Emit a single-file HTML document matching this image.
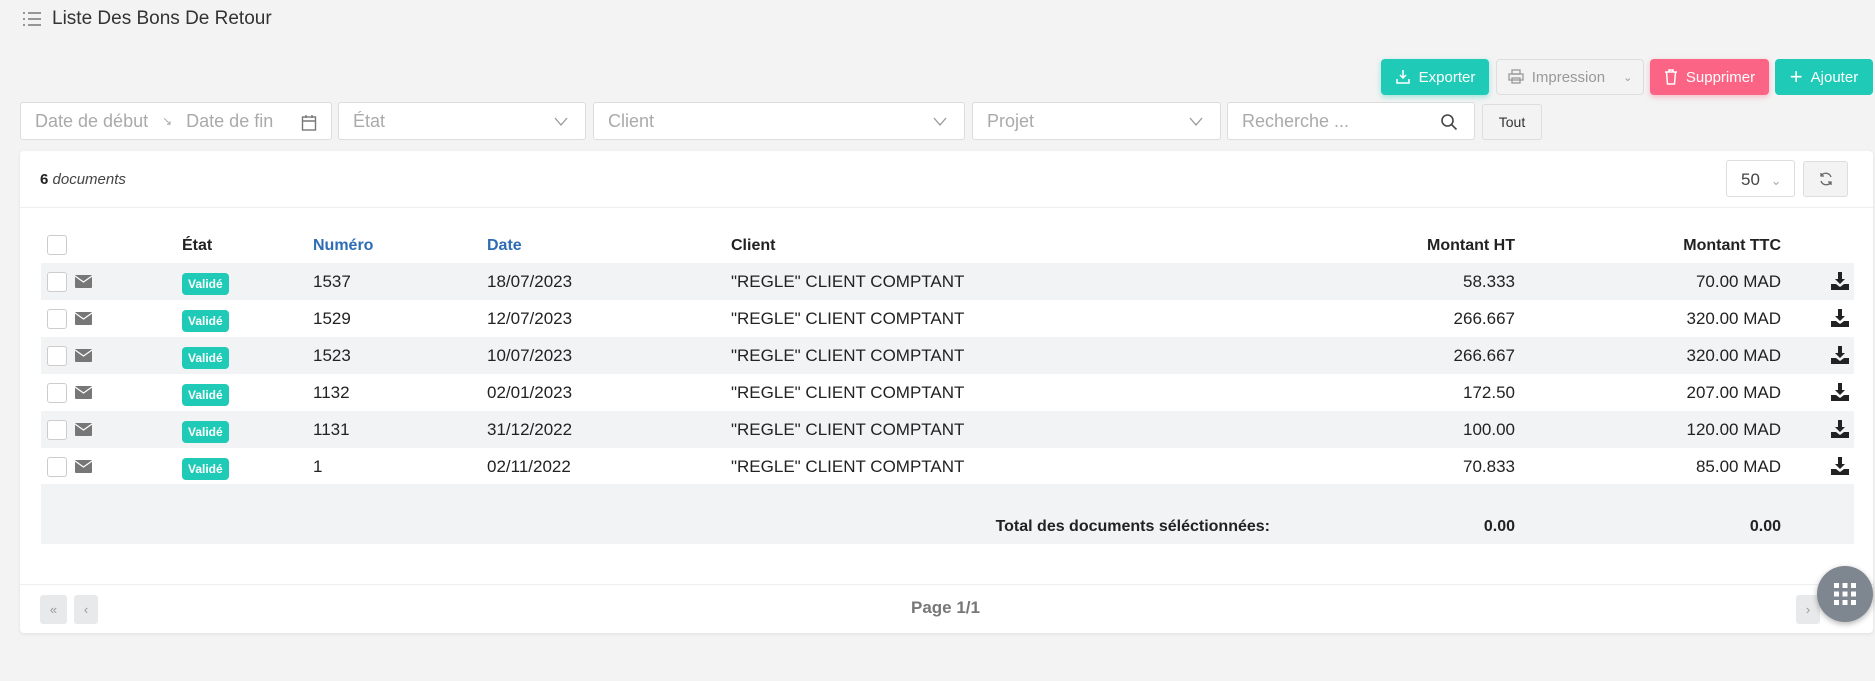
<!DOCTYPE html>
<html><head><meta charset="utf-8"><style>
*{box-sizing:border-box;margin:0;padding:0}
body{width:1875px;height:681px;background:#f3f3f3;font-family:"Liberation Sans",sans-serif;color:#222;position:relative;overflow:hidden;font-size:17px}
.a{position:absolute}
.title{left:22px;top:8px;font-size:19px;color:#333;display:flex;align-items:center;gap:10px}
.btn{position:absolute;top:59px;height:36px;border-radius:4px;color:#fff;font-size:15px;display:flex;align-items:center;justify-content:center;gap:8px}
.inp{position:absolute;top:102px;height:38px;background:#fff;border:1px solid #dcdcdc;border-radius:3px;color:#aaa;font-size:18px;display:flex;align-items:center;padding-left:14px}
.chev{position:absolute;right:16px;top:10px}
.card{left:20px;top:151px;width:1853px;height:482px;background:#fff;border-radius:4px;box-shadow:0 1px 3px rgba(0,0,0,.08)}
.row{position:absolute;left:41px;width:1813px;height:37px;font-size:17px}
.row span{position:absolute;top:9px}
.g{background:#f2f3f5}
.cb{position:absolute;left:6px;top:9px;width:20px;height:20px;border:1px solid #ccc;border-radius:3px;background:#fff}
.badge{position:absolute;left:141px;top:10px;background:#1fcbb7;color:#fff;font-size:12px;padding:4px 6px;border-radius:4px;font-weight:bold}
.r{text-align:right}
</style></head><body>
<div class="a title"><svg width="20" height="16" viewBox="0 0 20 16" stroke="#777" stroke-width="1.4"><path d="M1 2h2M6 2h13M1 8h2M6 8h13M1 14h2M6 14h13"/></svg>Liste Des Bons De Retour</div>

<div class="btn" style="left:1381px;width:108px;background:#1fcbb7;box-shadow:0 2px 6px rgba(31,203,183,.4)"><svg width="16" height="16" viewBox="0 0 16 16" fill="none" stroke="#fff" stroke-width="1.5"><path d="M8 1v8M5 6l3 3 3-3M2 10v4h12v-4"/></svg>Exporter</div>
<div class="btn" style="left:1496px;width:148px;background:#f3f3f3;border:1px solid #ddd;color:#999"><svg width="16" height="16" viewBox="0 0 16 16" fill="none" stroke="#999" stroke-width="1.3"><rect x="4" y="1" width="8" height="4"/><rect x="1" y="5" width="14" height="6"/><rect x="4" y="9" width="8" height="5"/></svg>Impression <span style="font-size:11px;margin-left:10px">&#8964;</span></div>
<div class="btn" style="left:1650px;width:119px;background:#fb6485;box-shadow:0 2px 6px rgba(251,100,133,.4)"><svg width="14" height="16" viewBox="0 0 14 16" fill="none" stroke="#fff" stroke-width="1.5"><path d="M1 3h12M5 3V1h4v2M2.5 3l1 12h7l1-12"/></svg>Supprimer</div>
<div class="btn" style="left:1775px;width:98px;background:#1fcbb7"><span style="font-size:22px;font-weight:300">+</span>Ajouter</div>

<div class="inp" style="left:20px;width:312px">Date de début <span style="margin:0 14px;font-size:12px">&#x2198;</span> Date de fin
<svg class="chev" width="16" height="18" viewBox="0 0 16 18" fill="none" stroke="#777" stroke-width="1.4" style="top:11px;right:14px"><rect x="1.5" y="3" width="13" height="13"/><path d="M1.5 7h13M5 1v3M11 1v3"/></svg></div>
<div class="inp" style="left:338px;width:248px">État<svg class="chev" width="16" height="16" viewBox="0 0 16 16" fill="none" stroke="#999" stroke-width="1.3"><path d="M2 5l6 7 6-7"/></svg></div>
<div class="inp" style="left:593px;width:372px">Client<svg class="chev" width="16" height="16" viewBox="0 0 16 16" fill="none" stroke="#999" stroke-width="1.3"><path d="M2 5l6 7 6-7"/></svg></div>
<div class="inp" style="left:972px;width:249px">Projet<svg class="chev" width="16" height="16" viewBox="0 0 16 16" fill="none" stroke="#999" stroke-width="1.3"><path d="M2 5l6 7 6-7"/></svg></div>
<div class="inp" style="left:1227px;width:248px">Recherche ...<svg class="chev" width="18" height="18" viewBox="0 0 18 18" fill="none" stroke="#444" stroke-width="1.6"><circle cx="7.5" cy="7.5" r="5.5"/><path d="M11.5 11.5l5 5"/></svg></div>
<div class="a" style="left:1482px;top:104px;width:60px;height:36px;background:#f3f3f3;border:1px solid #ddd;border-radius:3px;font-size:14px;display:flex;align-items:center;justify-content:center;color:#333">Tout</div>

<div class="a card"></div>
<div class="a" style="left:40px;top:171px;font-size:15px"><b>6</b> <i style="color:#444">documents</i></div>
<div class="a" style="left:1726px;top:160px;width:69px;height:37px;border:1px solid #ddd;border-radius:3px;background:#fff;font-size:17px;color:#444;padding:9px 0 0 14px">50 <span style="color:#aaa;font-size:13px;margin-left:6px">&#8964;</span></div>
<div class="a" style="left:1803px;top:161px;width:45px;height:36px;border:1px solid #ddd;border-radius:3px;background:#f3f3f3;display:flex;align-items:center;justify-content:center"><svg width="16" height="16" viewBox="0 0 16 16" fill="none" stroke="#666" stroke-width="1.3"><path d="M13 6A5.5 5.5 0 0 0 3 5M3 10a5.5 5.5 0 0 0 10 1M3 2v3h3M13 14v-3h-3"/></svg></div>
<div class="a" style="left:20px;top:207px;width:1853px;height:1px;background:#eee"></div>

<div class="row" style="top:228px;font-weight:bold;font-size:16px">
<div class="cb" style="top:7px"></div>
<span style="left:141px">État</span><span style="left:272px;color:#2e6db4">Numéro</span><span style="left:446px;color:#2e6db4">Date</span><span style="left:690px">Client</span>
<span class="r" style="right:339px">Montant HT</span><span class="r" style="right:73px">Montant TTC</span></div>

<div id="rows"></div>
<script>
var d=[["1537","18/07/2023","58.333","70.00"],["1529","12/07/2023","266.667","320.00"],["1523","10/07/2023","266.667","320.00"],["1132","02/01/2023","172.50","207.00"],["1131","31/12/2022","100.00","120.00"],["1","02/11/2022","70.833","85.00"]];
var h="";d.forEach(function(r,i){h+='<div class="row'+(i%2==0?' g':'')+'" style="top:'+(263+i*37)+'px"><div class="cb"></div><svg style="position:absolute;left:34px;top:12px" width="17" height="13" viewBox="0 0 17 13"><rect width="17" height="13" rx="1" fill="#777"/><path d="M0 1l8.5 6L17 1" stroke="#fff" stroke-width="1.2" fill="none"/></svg><div class="badge">Validé</div><span style="left:272px">'+r[0]+'</span><span style="left:446px">'+r[1]+'</span><span style="left:690px">"REGLE" CLIENT COMPTANT</span><span class="r" style="right:339px">'+r[2]+'</span><span class="r" style="right:73px">'+r[3]+' MAD</span><svg style="position:absolute;left:1790px;top:9px" width="18" height="18" viewBox="0 0 18 18" fill="#222"><path d="M7 0h4v7h3l-5 5-5-5h3z"/><path d="M0 12h5l4 3 4-3h5v6H0z"/></svg></div>'});
document.getElementById("rows").innerHTML=h;
</script>

<div class="a g" style="left:41px;top:484px;width:1813px;height:60px"></div>
<div class="a" style="left:41px;top:518px;width:1813px;font-size:16px;font-weight:bold">
<span class="a" style="right:584px;white-space:nowrap">Total des documents séléctionnées:</span>
<span class="a" style="right:339px">0.00</span><span class="a" style="right:73px">0.00</span></div>

<div class="a" style="left:20px;top:584px;width:1853px;height:1px;background:#eee"></div>
<div class="a" style="left:40px;top:595px;width:27px;height:29px;background:#e8e9eb;border-radius:3px;color:#999;font-size:13px;text-align:center;line-height:29px">«</div>
<div class="a" style="left:74px;top:595px;width:24px;height:29px;background:#e8e9eb;border-radius:3px;color:#999;font-size:13px;text-align:center;line-height:29px">‹</div>
<div class="a" style="left:1796px;top:595px;width:24px;height:29px;background:#e8e9eb;border-radius:3px;color:#999;font-size:13px;text-align:center;line-height:29px">›</div>
<div class="a" style="left:911px;top:598px;font-size:17px;font-weight:bold;color:#777">Page 1/1</div>
<div class="a" style="left:1817px;top:566px;width:56px;height:56px;border-radius:50%;background:#7e868f;box-shadow:0 2px 6px rgba(0,0,0,.3)">
<svg style="position:absolute;left:16px;top:16px" width="24" height="24" viewBox="0 0 24 24" fill="#fff"><rect x="1" y="1" width="5" height="5"/><rect x="9.5" y="1" width="5" height="5"/><rect x="18" y="1" width="5" height="5"/><rect x="1" y="9.5" width="5" height="5"/><rect x="9.5" y="9.5" width="5" height="5"/><rect x="18" y="9.5" width="5" height="5"/><rect x="1" y="18" width="5" height="5"/><rect x="9.5" y="18" width="5" height="5"/><rect x="18" y="18" width="5" height="5"/></svg></div>
</body></html>
